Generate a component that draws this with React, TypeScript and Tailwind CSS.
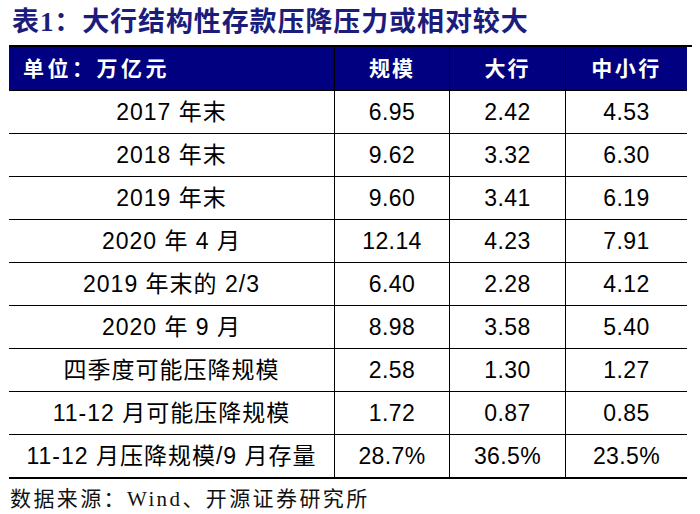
const rows: [string, string, string, string][] = [
  ["2017 年末", "6.95", "2.42", "4.53"],
  ["2018 年末", "9.62", "3.32", "6.30"],
  ["2019 年末", "9.60", "3.41", "6.19"],
  ["2020 年 4 月", "12.14", "4.23", "7.91"],
  ["2019 年末的 2/3", "6.40", "2.28", "4.12"],
  ["2020 年 9 月", "8.98", "3.58", "5.40"],
  ["四季度可能压降规模", "2.58", "1.30", "1.27"],
  ["11-12 月可能压降规模", "1.72", "0.87", "0.85"],
  ["11-12 月压降规模/9 月存量", "28.7%", "36.5%", "23.5%"],
];

const cols = "grid grid-cols-[326px_115px_116px_121px]";
const num = "flex items-center justify-center tracking-[0.4px]";

export default function App() {
  return (
    <div
      className="w-[700px] h-[514px] bg-white pl-[9px]"
      style={{ fontFamily: '"Liberation Sans", "Noto Sans CJK SC", sans-serif' }}
    >
      <div
        className="h-[45px] flex items-center pl-[3px] text-[27px] font-bold tracking-[0.9px] text-[#1c1c7c]"
        style={{ fontFamily: '"Liberation Serif", "Noto Sans CJK SC", serif' }}
      >
        表1：大行结构性存款压降压力或相对较大
      </div>
      <div className="h-[2px] w-[683px] bg-black" />
      <div className="w-[678px]">
        <div className={`${cols} h-[44px] bg-[#000080] border-b border-black text-white text-[21px] font-bold`}>
          <div className="flex items-center pl-[14px] border-r border-black tracking-[3.5px]">单位：万亿元</div>
          <div className="flex items-center justify-center border-r border-black tracking-[2px]">规模</div>
          <div className="flex items-center justify-center border-r border-black tracking-[2px]">大行</div>
          <div className="flex items-center justify-center tracking-[2.5px]">中小行</div>
        </div>
        {rows.map((r, i) => (
          <div
            key={i}
            className={`${cols} border-b border-black text-[23px] text-black ${i === rows.length - 1 ? "h-[44px] border-b-2" : "h-[43px]"}`}
          >
            <div className="flex items-center justify-center border-r border-black tracking-[1px]">{r[0]}</div>
            <div className={`${num} border-r border-black`}>{r[1]}</div>
            <div className={`${num} border-r border-black`}>{r[2]}</div>
            <div className={num}>{r[3]}</div>
          </div>
        ))}
      </div>
      <div
        className="pt-[5px] pl-[1px] text-[21px] tracking-[2.4px] text-[#111]"
        style={{ fontFamily: '"Liberation Serif", "Noto Sans CJK SC", serif' }}
      >
        数据来源：Wind、开源证券研究所
      </div>
    </div>
  );
}
